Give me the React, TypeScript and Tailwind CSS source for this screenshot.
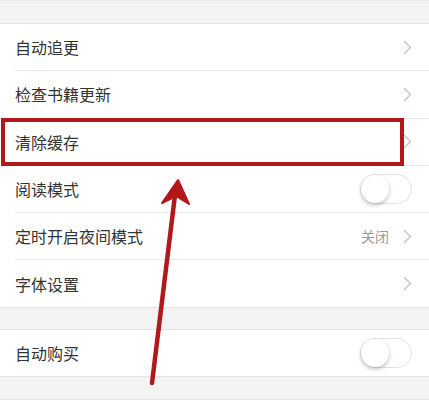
import React from 'react'

type Row = { label: string; kind: 'arrow' | 'toggle'; value?: string }

const GROUP_ONE: Row[] = [
  { label: '自动追更', kind: 'arrow' },
  { label: '检查书籍更新', kind: 'arrow' },
  { label: '清除缓存', kind: 'arrow' },
  { label: '阅读模式', kind: 'toggle' },
  { label: '定时开启夜间模式', kind: 'arrow', value: '关闭' },
  { label: '字体设置', kind: 'arrow' },
]

const Chevron = () => (
  <svg width="9" height="15" viewBox="0 0 9 15" fill="none">
    <path d="M1.5 1.5 L7.5 7.5 L1.5 13.5" stroke="#c4c4c8" strokeWidth="1.4" strokeLinecap="round" strokeLinejoin="round" />
  </svg>
)

const Toggle = () => (
  <div className="relative w-[52px] h-[30px] rounded-full border border-[#e3e3e3] bg-white">
    <div className="absolute left-0 top-0 w-[28px] h-[28px] rounded-full bg-white shadow-[0_2px_4px_rgba(0,0,0,0.25)]" />
  </div>
)

const SettingRow: React.FC<{ row: Row; last?: boolean }> = ({ row, last }) => (
  <div className={'h-[47.3px] flex items-center pl-[15px] ' + (last ? 'border-b border-[#e4e4e4]' : '')}>
    <div className={'flex-1 h-full flex items-center pr-[17px] ' + (last ? '' : 'border-b border-[#e8e8e8]')}>
      <span className="flex-1 text-[16px] text-[#333]">{row.label}</span>
      {row.value && <span className="text-[14px] text-[#9a9a9a] mr-[14px]">{row.value}</span>}
      {row.kind === 'arrow' ? <Chevron /> : <Toggle />}
    </div>
  </div>
)

export default function App() {
  return (
    <div
      className="relative w-[429px] h-[403px] overflow-hidden bg-[#f3f3f3]"
      style={{ fontFamily: '"Noto Sans CJK SC", "Noto Sans", sans-serif' }}
    >
      <div className="h-[1px] bg-[#f6e9e6]" />
      <div className="h-[23px] border-b border-[#e4e4e4]" />
      <div className="bg-white">
        {GROUP_ONE.map((row, i) => (
          <SettingRow key={row.label} row={row} last={i === GROUP_ONE.length - 1} />
        ))}
      </div>
      <div className="h-[22px] border-b border-[#e4e4e4]" />
      <div className="bg-white">
        <SettingRow row={{ label: '自动购买', kind: 'toggle' }} last />
      </div>
      <div className="h-[22px]" />
      <div className="h-[10px] bg-white border-t border-[#e6e6e6]" />

      {/* highlight box */}
      <div className="absolute left-[1px] top-[118px] w-[403px] h-[48px] border-[4px] border-[#b2181a]" />

      {/* pointer arrow */}
      <svg className="absolute left-0 top-0" width="429" height="403" viewBox="0 0 429 403">
        <line x1="175" y1="195" x2="152" y2="383" stroke="#b2181a" strokeWidth="4.5" strokeLinecap="round" />
        <path d="M178 180 L189 204 L176 196 L162 203 Z" fill="#b2181a" stroke="#b2181a" strokeWidth="2" strokeLinejoin="round" />
      </svg>
    </div>
  )
}
